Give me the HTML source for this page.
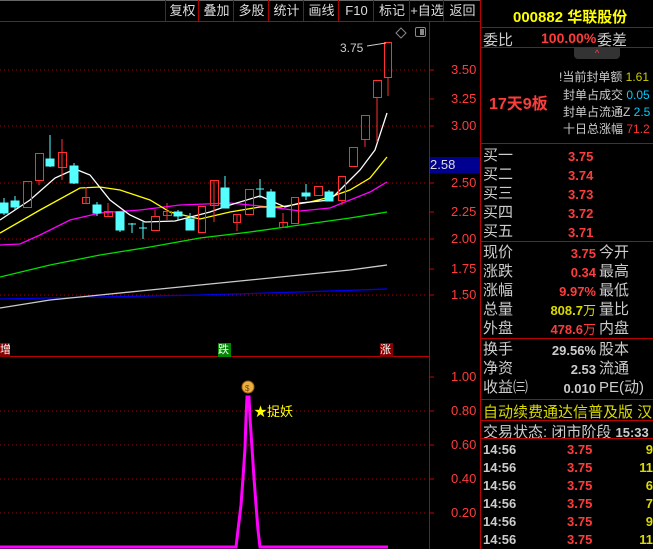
<!DOCTYPE html>
<html><head><meta charset="utf-8"><style>
body{margin:0;width:653px;height:549px;background:#000;overflow:hidden;position:relative;font-family:"Liberation Sans","Noto Sans CJK SC",sans-serif;}
.a{position:absolute;white-space:nowrap;}
.tb{position:absolute;top:0;height:21px;line-height:22px;color:#ddd;font-size:13px;text-align:center;border-left:1px solid #a00;}
.hl{position:absolute;left:480px;width:173px;height:1px;background:#b00;}
.l{color:#ccc;font-size:15px;}
.r{color:#ff3c3c;font-weight:bold;font-size:13px;}
.y{color:#dada00;font-weight:bold;font-size:13px;}
.w{color:#ccc;font-weight:bold;font-size:13px;}
.ax{position:absolute;left:451px;color:#ff3c3c;font-size:13px;}
</style></head><body>
<div class="a" style="left:0;top:0;width:480px;height:1px;background:#666"></div>
<div class="tb" style="left:165px;width:33px">复权</div>
<div class="tb" style="left:198px;width:35px">叠加</div>
<div class="tb" style="left:233px;width:35px">多股</div>
<div class="tb" style="left:268px;width:35px">统计</div>
<div class="tb" style="left:303px;width:35px">画线</div>
<div class="tb" style="left:338px;width:35px">F10</div>
<div class="tb" style="left:373px;width:36px">标记</div>
<div class="tb" style="left:409px;width:34px">+自选</div>
<div class="tb" style="left:443px;width:37px">返回</div>
<div class="a" style="left:0;top:21px;width:480px;height:1px;background:#b00"></div>
<div class="a" style="left:429px;top:22px;width:1px;height:527px;background:#b00"></div>
<div class="a" style="left:0;top:356px;width:430px;height:1px;background:#b00"></div>
<div class="a" style="left:480px;top:0;width:1px;height:549px;background:#b00"></div>
<svg class="a" style="left:0;top:0" width="480" height="549">
<g stroke="#a00" stroke-dasharray="1 3">
<line x1="0" y1="70" x2="428" y2="70"/><line x1="0" y1="126" x2="428" y2="126"/><line x1="0" y1="183" x2="428" y2="183"/><line x1="0" y1="239" x2="428" y2="239"/><line x1="0" y1="295" x2="428" y2="295"/>
<line x1="0" y1="411" x2="428" y2="411"/><line x1="0" y1="445" x2="428" y2="445"/><line x1="0" y1="479" x2="428" y2="479"/><line x1="0" y1="513" x2="428" y2="513"/>
</g>
<g stroke="#c00"><line x1="429" y1="70" x2="434" y2="70"/><line x1="429" y1="99" x2="434" y2="99"/><line x1="429" y1="126" x2="434" y2="126"/><line x1="429" y1="183" x2="434" y2="183"/><line x1="429" y1="212" x2="434" y2="212"/><line x1="429" y1="239" x2="434" y2="239"/><line x1="429" y1="269" x2="434" y2="269"/><line x1="429" y1="295" x2="434" y2="295"/>
<line x1="429" y1="377" x2="434" y2="377"/><line x1="429" y1="411" x2="434" y2="411"/><line x1="429" y1="445" x2="434" y2="445"/><line x1="429" y1="479" x2="434" y2="479"/><line x1="429" y1="513" x2="434" y2="513"/></g>
<g fill="none" stroke-width="1.3">
<polyline stroke="#0000ee" points="0,299 100,297 200,295 300,292 387,289"/>
<polyline stroke="#ccc" points="0,308 50,300 100,295 150,290 200,285 250,280 300,275 350,270 387,265"/>
<polyline stroke="#00e000" points="0,277 50,265 100,255 150,247 200,238 250,232 300,225 350,218 387,212"/>
<polyline stroke="#ff00ff" points="0,245 20,244 40,235 70,220 100,213 140,210 180,205 230,203 270,207 300,211 330,208 350,200 370,192 387,182"/>
<polyline stroke="#ffff00" points="0,233 40,210 80,188 100,187 120,190 150,200 170,212 200,219 230,212 260,207 280,207 310,202 330,197 350,190 370,178 387,157"/>
<polyline stroke="#fff" points="0,220 30,200 55,178 75,169 90,175 110,200 130,215 145,222 175,221 210,212 230,205 260,196 285,207 300,203 330,200 345,185 360,170 375,150 387,113"/>
</g>
<g fill="#5ff" stroke="#5ff">
<line x1="4" y1="198" x2="4" y2="215"/><rect x="0" y="203" width="8" height="10"/>
<line x1="15" y1="196" x2="15" y2="210"/><rect x="11" y="201" width="8" height="6"/>
<line x1="50" y1="135" x2="50" y2="167"/><rect x="46" y="159" width="8" height="7"/>
<line x1="74" y1="163" x2="74" y2="184"/><rect x="70" y="166" width="8" height="17"/>
<line x1="97" y1="202" x2="97" y2="216"/><rect x="93" y="205" width="8" height="8"/>
<line x1="120" y1="212" x2="120" y2="232"/><rect x="116" y="212" width="8" height="18"/>
<line x1="132" y1="223" x2="132" y2="233"/><line x1="128" y1="224" x2="136" y2="224"/>
<line x1="143" y1="221" x2="143" y2="239"/><line x1="139" y1="228" x2="147" y2="228"/>
<line x1="178" y1="210" x2="178" y2="220"/><rect x="174" y="212" width="8" height="4"/>
<line x1="190" y1="213" x2="190" y2="230"/><rect x="186" y="219" width="8" height="11"/>
<line x1="225" y1="176" x2="225" y2="208"/><rect x="221" y="188" width="8" height="20"/>
<line x1="260" y1="179" x2="260" y2="198"/><line x1="256" y1="189" x2="264" y2="189"/>
<line x1="271" y1="189" x2="271" y2="217"/><rect x="267" y="192" width="8" height="25"/>
<line x1="306" y1="184" x2="306" y2="200"/><rect x="302" y="193" width="8" height="3"/>
<line x1="329" y1="190" x2="329" y2="201"/><rect x="325" y="192" width="8" height="9"/>
</g>
<g fill="none" stroke="#ff3030">
<rect x="23.5" y="181.5" width="8" height="26"/>
<line x1="39" y1="180" x2="39" y2="185"/><rect x="35.5" y="153.5" width="8" height="27"/>
<line x1="62" y1="139" x2="62" y2="180"/><rect x="58.5" y="152.5" width="8" height="15"/>
<line x1="86" y1="187" x2="86" y2="203"/><rect x="82.5" y="197.5" width="7" height="6"/>
<line x1="108" y1="203" x2="108" y2="216"/><rect x="104.5" y="211.5" width="8" height="5"/>
<rect x="151.5" y="216.5" width="8" height="14"/><line x1="155" y1="210" x2="155" y2="216"/>
<line x1="167" y1="203" x2="167" y2="220"/><rect x="163.5" y="211.5" width="8" height="4"/>
<rect x="198.5" y="206.5" width="7" height="26"/>
<line x1="214" y1="180" x2="214" y2="222"/><rect x="210.5" y="180.5" width="8" height="25"/>
<line x1="237" y1="214" x2="237" y2="231"/><rect x="233.5" y="214.5" width="7" height="8"/>
<rect x="245.5" y="189.5" width="8" height="25"/>
<line x1="283" y1="213" x2="283" y2="227"/><rect x="279.5" y="222.5" width="8" height="5"/>
<rect x="291.5" y="197.5" width="7" height="26"/>
<rect x="314.5" y="186.5" width="8" height="9"/>
<line x1="342" y1="200" x2="342" y2="205"/><rect x="338.5" y="176.5" width="7" height="24"/>
<rect x="349.5" y="147.5" width="8" height="19"/>
<line x1="365" y1="139" x2="365" y2="147"/><rect x="361.5" y="115.5" width="8" height="24"/>
<line x1="377" y1="97" x2="377" y2="142"/><rect x="373.5" y="80.5" width="8" height="17"/>
<line x1="388" y1="77" x2="388" y2="96"/><rect x="384.5" y="42.5" width="7" height="35"/>
</g>
<line x1="367" y1="46" x2="386" y2="43" stroke="#ccc"/>
<text x="340" y="52" fill="#ccc" font-size="12" font-family="Liberation Sans">3.75</text>
<path d="M401 28 l5 5 -5 5 -5 -5z" fill="none" stroke="#888"/>
<rect x="415.5" y="27.5" width="10" height="9" rx="1.5" fill="none" stroke="#888"/><rect x="420" y="29" width="4" height="6" fill="#888"/>
<polyline fill="none" stroke="#f0f" stroke-width="3" points="0,547 236,547 238,530 241,505 243,478 245,448 246,418 247,397 249,397 250,418 252,448 254,478 256,505 258,530 260,547 388,547"/>
<circle cx="248" cy="387" r="6" fill="#e8b040" stroke="#a06010"/><text x="245" y="391" font-size="8" fill="#804000">$</text>
<text x="254" y="416" fill="#ffff00" font-size="13">★捉妖</text>
</svg>
<div class="a" style="left:0;top:343px;width:10px;height:14px;background:#800;color:#fff;font-size:11px;line-height:14px">增</div>
<div class="a" style="left:218px;top:343px;width:13px;height:14px;background:#080;color:#fff;font-size:11px;line-height:14px">跌</div>
<div class="a" style="left:380px;top:343px;width:13px;height:14px;background:#800;color:#fff;font-size:11px;line-height:14px">涨</div>
<div class="ax" style="top:62px">3.50</div><div class="ax" style="top:91px">3.25</div><div class="ax" style="top:118px">3.00</div>
<div class="ax" style="top:175px">2.50</div><div class="ax" style="top:204px">2.25</div><div class="ax" style="top:231px">2.00</div><div class="ax" style="top:261px">1.75</div><div class="ax" style="top:287px">1.50</div>
<div class="a" style="left:430px;top:157px;width:50px;height:16px;background:#000090;color:#ddd;font-size:13px;line-height:16px">2.58</div>
<div class="ax" style="top:369px">1.00</div><div class="ax" style="top:403px">0.80</div><div class="ax" style="top:437px">0.60</div><div class="ax" style="top:471px">0.40</div><div class="ax" style="top:505px">0.20</div>
<!-- right panel -->
<div class="a" style="left:513px;top:6px;color:#ffff00;font-size:15px;font-weight:bold">000882 华联股份</div>
<div class="hl" style="top:27px"></div>
<div class="a l" style="left:483px;top:29px">委比</div>
<div class="a" style="left:541px;top:30px;color:#ff3c3c;font-size:14px;font-weight:bold">100.00%</div>
<div class="a l" style="left:597px;top:29px">委差</div>
<div class="hl" style="top:47px"></div>
<div class="a" style="left:574px;top:48px;width:46px;height:11px;background:#333;border-radius:0 0 4px 4px;color:#f44;font-size:9px;text-align:center;line-height:10px">^</div>
<div class="a" style="left:489px;top:90px;color:#ff3c3c;font-size:16px;font-weight:bold">17天9板</div>
<div class="a" style="left:559px;top:68px;color:#ccc;font-size:12px">!当前封单额 <span style="color:#cc0">1.61</span></div>
<div class="a" style="left:563px;top:86px;color:#ccc;font-size:12px">封单占成交 <span style="color:#0cf">0.05</span></div>
<div class="a" style="left:563px;top:103px;color:#ccc;font-size:12px">封单占流通Z <span style="color:#0cf">2.5</span></div>
<div class="a" style="left:563px;top:120px;color:#ccc;font-size:12px">十日总涨幅 <span style="color:#f33">71.2</span></div>
<div class="hl" style="top:143px"></div>
<div class="a l" style="left:483px;top:146px;line-height:19px">买一<br>买二<br>买三<br>买四<br>买五</div>
<div class="a r" style="left:568px;top:147px;line-height:19px;font-size:13px">3.75<br>3.74<br>3.73<br>3.72<br>3.71</div>
<div class="hl" style="top:241px"></div>
<div class="a l" style="left:483px;top:243px;line-height:19px">现价<br>涨跌<br>涨幅<br>总量<br>外盘</div>
<div class="a" style="left:520px;top:244px;width:76px;text-align:right;line-height:19px;font-size:13px;font-weight:bold;color:#ff3c3c">3.75<br>0.34<br>9.97%<br><span style="color:#dada00">808.7</span><span style="color:#dada00;font-weight:normal">万</span><br>478.6<span style="font-weight:normal">万</span></div>
<div class="a l" style="left:599px;top:243px;line-height:19px">今开<br>最高<br>最低<br>量比<br>内盘</div>
<div class="hl" style="top:338px"></div>
<div class="a l" style="left:483px;top:340px;line-height:19px">换手<br>净资<br>收益㈢</div>
<div class="a w" style="left:520px;top:341px;width:76px;text-align:right;line-height:19px">29.56%<br>2.53<br>0.010</div>
<div class="a l" style="left:599px;top:340px;line-height:19px">股本<br>流通<br>PE(动)</div>
<div class="hl" style="top:399px"></div>
<div class="a" style="left:483px;top:401px;color:#dada00;font-size:15px">自动续费通达信普及版 汉</div>
<div class="hl" style="top:420px"></div>
<div class="a l" style="left:483px;top:421px">交易状态: 闭市阶段 <span style="font-size:13px;font-weight:bold">15:33</span></div>
<div class="hl" style="top:438px"></div>
<div class="a w" style="left:483px;top:441px;line-height:18px">14:56<br>14:56<br>14:56<br>14:56<br>14:56<br>14:56</div>
<div class="a r" style="left:567px;top:441px;line-height:18px">3.75<br>3.75<br>3.75<br>3.75<br>3.75<br>3.75</div>
<div class="a y" style="left:620px;top:441px;width:33px;text-align:right;line-height:18px;font-weight:bold">9<br>11<br>6<br>7<br>9<br>11</div>
</body></html>
